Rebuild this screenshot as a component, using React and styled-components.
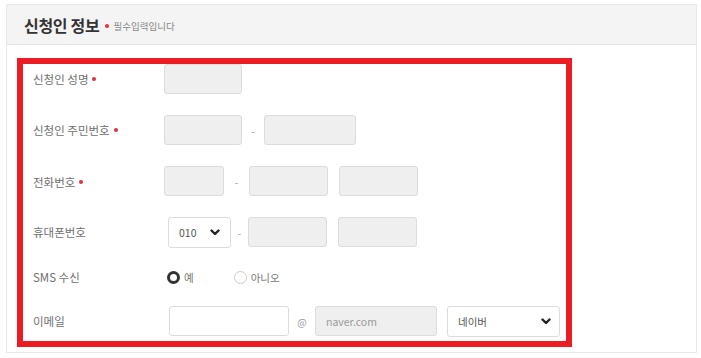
import React from 'react';
import styled, { createGlobalStyle } from 'styled-components';

const GlobalStyle = createGlobalStyle`
  html, body {
    margin: 0;
    padding: 0;
    background: #fff;
    font-family: "Noto Sans CJK KR", "Noto Sans", sans-serif;
  }
  * { box-sizing: border-box; }
`;

const Panel = styled.section`
  margin: 4px 5px 0 6px;
  width: 691px;
  height: 349px;
  border: 1px solid #e8e8e8;
  background: #fff;
`;

const PanelHeader = styled.div`
  height: 40px;
  display: flex;
  align-items: center;
  padding-left: 17px;
  background: #f4f4f4;
  border-bottom: 1px solid #e3e3e3;
`;

const Title = styled.h2`
  margin: 0;
  font-size: 16px;
  font-weight: 700;
  color: #333;
  letter-spacing: -0.3px;
`;

const RequiredNote = styled.span`
  display: flex;
  align-items: center;
  margin-left: 6px;
  padding-top: 2px;
  font-size: 9.5px;
  color: #888;
`;

const Dot = styled.i`
  display: inline-block;
  width: 4px;
  height: 4px;
  border-radius: 50%;
  background: #e0303a;
  margin: 0 ${(p) => p.$gap || 4}px 0 ${(p) => p.$before || 0}px;
`;

const PanelBody = styled.div`
  padding: 13px 0 0 10px;
`;

const Highlight = styled.div`
  width: 555px;
  height: 289px;
  border: 6px solid #ec1c24;
  padding-left: 10px;
  display: flex;
  flex-direction: column;
`;

const Row = styled.div`
  display: flex;
  align-items: center;
  height: 30px;
  margin-top: ${(p) => p.$mt || 0}px;
`;

const Label = styled.div`
  width: 131px;
  flex-shrink: 0;
  display: flex;
  align-items: center;
  font-size: 11.5px;
  color: #707070;
  padding-top: ${(p) => p.$top || 0}px;
`;

const Controls = styled.div`
  display: flex;
  align-items: center;
  height: 100%;
  padding-left: ${(p) => p.$ml || 0}px;
`;

const Box = styled.div`
  width: ${(p) => p.$w}px;
  height: 30px;
  border: 1px solid #dcdcdc;
  border-radius: 3px;
  background: ${(p) => (p.$white ? '#fff' : '#efefef')};
  margin-left: ${(p) => p.$ml || 0}px;
  display: flex;
  align-items: center;
  padding: 0 10px;
  font-size: 10.5px;
  color: #9a9a9a;
`;

const Dash = styled.span`
  width: ${(p) => p.$w}px;
  text-align: center;
  font-size: 10px;
  color: #999;
`;

const At = styled.span`
  width: 26px;
  text-align: center;
  font-size: 10px;
  color: #999;
`;

const Select = styled.div`
  width: ${(p) => p.$w}px;
  height: 31px;
  border: 1px solid #dcdcdc;
  border-radius: 3px;
  background: #fff;
  margin-left: ${(p) => p.$ml || 0}px;
  display: flex;
  align-items: center;
  justify-content: space-between;
  padding: 0 ${(p) => p.$pr || 8}px 0 10px;
  font-size: 10.5px;
  color: #555;
`;

const RadioGroup = styled.label`
  display: flex;
  align-items: center;
  margin-right: ${(p) => p.$mr || 0}px;
  font-size: 10.5px;
  color: #777;
`;

const RadioMark = styled.span`
  width: 13px;
  height: 13px;
  border-radius: 50%;
  margin-right: 4px;
  background: #fff;
  border: ${(p) => (p.$checked ? '3.5px solid #333' : '1px solid #ccc')};
`;

const Chevron = () => (
  <svg width="10" height="7" viewBox="0 0 10 7">
    <polyline points="1.5,1.5 5,5 8.5,1.5" fill="none" stroke="#222" strokeWidth="2.4" strokeLinecap="round" strokeLinejoin="round" />
  </svg>
);

const App = () => (
  <>
    <GlobalStyle />
    <Panel>
      <PanelHeader>
        <Title>신청인 정보</Title>
        <RequiredNote>
          <Dot />필수입력입니다
        </RequiredNote>
      </PanelHeader>
      <PanelBody>
        <Highlight>
          <Row>
            <Label>신청인 성명<Dot $before={4} /></Label>
            <Controls>
              <Box $w={78} />
            </Controls>
          </Row>

          <Row $mt={21}>
            <Label>신청인 주민번호<Dot $before={4} /></Label>
            <Controls>
              <Box $w={78} />
              <Dash $w={22}>-</Dash>
              <Box $w={92} />
            </Controls>
          </Row>

          <Row $mt={21}>
            <Label $top={2}>전화번호<Dot $before={4} /></Label>
            <Controls>
              <Box $w={60} />
              <Dash $w={25}>-</Dash>
              <Box $w={79} />
              <Box $w={79} $ml={11} />
            </Controls>
          </Row>

          <Row $mt={21}>
            <Label>휴대폰번호</Label>
            <Controls $ml={4}>
              <Select $w={63} $pr={10}>
                010
                <Chevron />
              </Select>
              <Dash $w={17}>-</Dash>
              <Box $w={79} />
              <Box $w={79} $ml={11} />
            </Controls>
          </Row>

          <Row $mt={15}>
            <Label>SMS 수신</Label>
            <Controls $ml={3}>
              <RadioGroup $mr={40}>
                <RadioMark $checked />예
              </RadioGroup>
              <RadioGroup>
                <RadioMark />아니오
              </RadioGroup>
            </Controls>
          </Row>

          <Row $mt={14}>
            <Label>이메일</Label>
            <Controls $ml={5}>
              <Box $w={120} $white />
              <At>@</At>
              <Box $w={122}>naver.com</Box>
              <Select $w={113} $ml={10}>
                네이버
                <Chevron />
              </Select>
            </Controls>
          </Row>
        </Highlight>
      </PanelBody>
    </Panel>
  </>
);

export default App;
